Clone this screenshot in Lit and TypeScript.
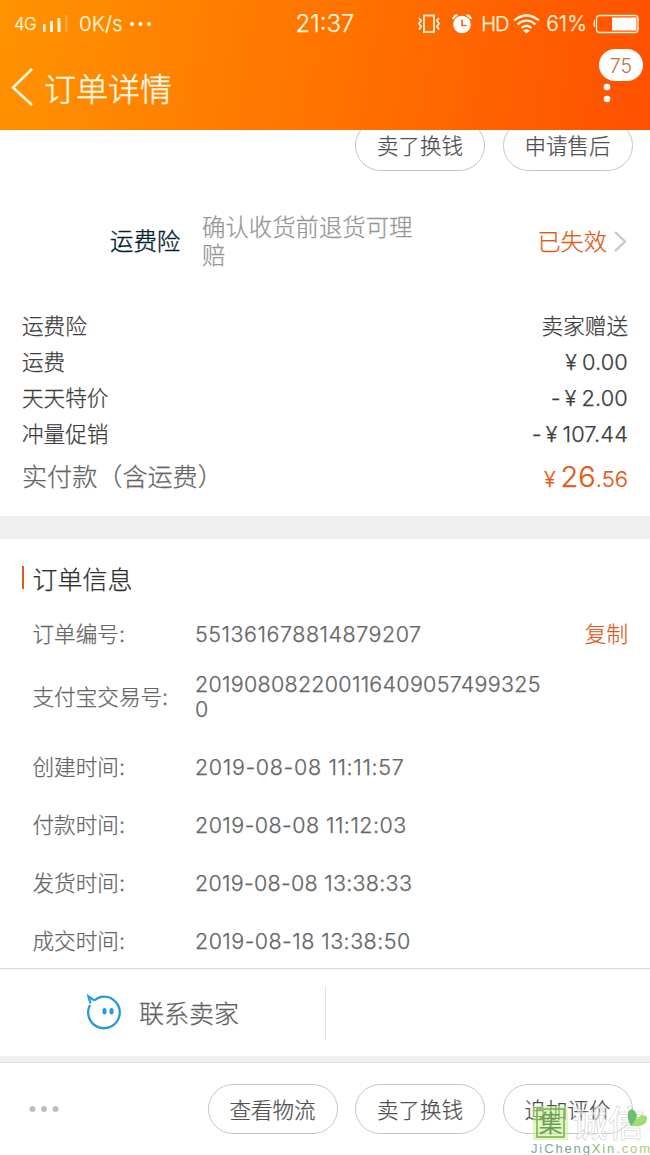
import { LitElement, html, css } from "lit";
import { customElement } from "lit/decorators.js";

interface InfoRow {
  label: string;
  value: string;
  kind: string;
  copy?: boolean;
}

const FEES = [
  { label: "运费险", value: "卖家赠送", kind: "cjk" },
  { label: "运费", sign: "", value: "0.00", kind: "num" },
  { label: "天天特价", sign: "-", value: "2.00", kind: "num" },
  { label: "冲量促销", sign: "-", value: "107.44", kind: "num" },
];

const INFO: InfoRow[] = [
  { label: "订单编号:", value: "551361678814879207", kind: "id", copy: true },
  { label: "支付宝交易号:", value: "2019080822001164090574993250", kind: "trade" },
  { label: "创建时间:", value: "2019-08-08 11:11:57", kind: "time wide" },
  { label: "付款时间:", value: "2019-08-08 11:12:03", kind: "time" },
  { label: "发货时间:", value: "2019-08-08 13:38:33", kind: "time tight" },
  { label: "成交时间:", value: "2019-08-18 13:38:50", kind: "time" },
];

@customElement("status-bar")
class StatusBar extends LitElement {
  static styles = css`
    :host { display: grid; grid-template-columns: 1fr auto 1fr; height: 44px; align-items: center;
      padding: 1px 11px 0 14px; box-sizing: border-box; color: #fff6dc; font: 300 20px/44px Inter, sans-serif; -webkit-text-stroke: .25px currentColor; }
    .left, .right { display: flex; align-items: center; }
    .right { justify-content: flex-end; }
    .net { font-size: 17px; letter-spacing: -0.8px; width: 24px; }
    .bars { margin-left: 5px; }
    .rate { margin-left: 11px; font-size: 20.500px; }
    .more { margin-left: 6px; }
    .clock { font-size: 24px; line-height: 45px; padding-right: 3px; }
    .alarm { margin-left: 11px; }
    .hd { margin-left: 9px; font-size: 20px; letter-spacing: -1.2px; }
    .wifi { margin-left: 5px; }
    .pct { margin-left: 6px; font-size: 21px; letter-spacing: .1px; }
    .battery { margin-left: 6px; }
    svg { display: block; flex: none; }
  `;
  render() {
    return html`
      <div class="left">
        <span class="net">4G</span>
        <svg class="bars" width="25" height="18" viewBox="0 0 25 18">
          <g fill="#fff6dc"><path d="M0 9h2.600v8H0zM7 6h3v11H7zM14.500 3h3v14h-3z"/></g>
          <path d="M22 0h2.500v17H22z" fill="#ffa540"/>
        </svg>
        <span class="rate">0K/s</span>
        <svg class="more" width="24" height="6"><g fill="#fff6dc"><circle cx="3" cy="3" r="2.100"/><circle cx="11.500" cy="3" r="2.100"/><circle cx="20" cy="3" r="2.100"/></g></svg>
      </div>
      <div class="clock">21:37</div>
      <div class="right">
        <svg width="24" height="20" viewBox="0 0 24 20" fill="none" stroke="#fff6dc" stroke-width="1.800">
          <rect x="7" y="1.500" width="10" height="16.500"/>
          <path d="M2 4l2 2.500-2 3 2 3-2 3M22 4l-2 2.500 2 3-2 3 2 3"/>
        </svg>
        <svg class="alarm" width="20" height="20" viewBox="0 0 20 20">
          <circle cx="10" cy="10.500" r="8.800" fill="#fff"/>
          <path d="M10 5.500v6h4.500" fill="none" stroke="#ff6600" stroke-width="1.700"/>
          <path d="M1 5q1-3.500 4.500-4M19 5q-1-3.500-4.500-4" fill="none" stroke="#fff" stroke-width="2"/>
        </svg>
        <span class="hd">HD</span>
        <svg class="wifi" width="27" height="20" viewBox="0 0 27 20" fill="none" stroke="#fff6dc" stroke-width="2.200">
          <path d="M1 6.500Q13.500-3.500 26 6.500M4.500 10.300Q13.500 2.800 22.500 10.300M8.500 14Q13.500 9.500 18.500 14"/>
          <path d="M10 16.500Q13.500 13.500 17 16.500L13.500 19.500Z" fill="#fff6dc" stroke="none"/>
        </svg>
        <span class="pct">61%</span>
        <svg class="battery" width="46" height="20" viewBox="0 0 46 20">
          <rect x="3.500" y="1.500" width="41.500" height="17" rx="3" fill="none" stroke="#fff6dc" stroke-width="1.300"/>
          <rect x="19" y="3.500" width="24.500" height="13" fill="#fff"/>
          <path d="M2 6v7H1q-1-3.500 0-7z" fill="#fff6dc"/>
        </svg>
      </div>`;
  }
}

@customElement("site-mark")
class SiteMark extends LitElement {
  static styles = css`
    :host { display: block; width: 122px; height: 49px; -webkit-text-stroke: 0; }
    svg { display: block; overflow: visible; }
    .seal { font: 400 24px "Noto Sans CJK SC", sans-serif; fill: #66a052; }
    .name { font: 500 36px "Noto Sans CJK SC", sans-serif; fill: #fff; fill-opacity: .5; stroke: #cfcbd0; stroke-width: .6; }
    .url { font: 400 13px "Liberation Sans", sans-serif; }
  `;
  render() {
    return html`<svg width="122" height="49" viewBox="0 0 122 49">
      <rect x="4" y="0" width="35" height="34" fill="#c8ef8d" opacity=".55"/>
      <rect x="8" y="3" width="27" height="28" fill="none" stroke="#79ad55" stroke-width="1.500"/>
      <text class="seal" x="9.500" y="26">集</text>
      <text class="name" x="43" y="31">诚信</text>
      <path d="M102 20Q95 6 103 3Q110 7 108 14Q112 6 118 11Q119 22 102 20Z" fill="#a2dc76"/>
      <path d="M102 20Q95 6 103 3Q112 9 102 20Z" fill="#6cbd76"/>
      <text class="url" x="2" y="47" textLength="119"><tspan fill="#83a9a3">Ji</tspan><tspan fill="#76a798">Cheng</tspan><tspan fill="#8bb976">Xin</tspan><tspan fill="#b1c873">.com</tspan></text>
    </svg>`;
  }
}

@customElement("app-root")
class AppRoot extends LitElement {
  static styles = css`
    :host { display: flex; flex-direction: column; width: 650px; height: 1155px; overflow: hidden; background: #fff;
      font-family: Inter, "Noto Sans CJK SC", sans-serif; font-weight: 300; color: #444; position: relative; white-space: nowrap;
      -webkit-text-stroke: .25px currentColor; }
    * { box-sizing: border-box; }
    svg { display: block; flex: none; }
    .header { height: 130px; flex: none; background: linear-gradient(100deg, #ff9300, #ff7500 48%, #ff5000); position: relative; z-index: 1; }
    .nav { height: 86px; display: flex; align-items: center; padding-left: 11px; color: #fffae6; }
    .title { font-size: 32px; line-height: 86px; margin: 5px 0 0 10px; -webkit-text-stroke-width: .4px; }
    .menu { margin: 23px 38.500px 0 auto; }
    .badge { position: absolute; left: 599px; top: 49px; width: 44px; height: 32px; border-radius: 16px; background: #fff;
      color: #c87048; font-size: 19.500px; line-height: 34px; text-align: center; -webkit-text-stroke: 0; }
    .actions { display: flex; gap: 17.500px; justify-content: flex-end; padding-right: 17.500px; flex: none; }
    .top { height: 50px; margin-top: -10px; }
    .pill { width: 130px; height: 50.500px; border: 1px solid #c6c6c6; border-radius: 26px; text-align: center;
      font-size: 21.500px; line-height: 50px; color: #505050; }
    .top .pill { line-height: 51px; }
    .insurance { height: 138px; flex: none; display: grid; grid-template-columns: 92px 1fr auto 12px; align-items: center;
      padding: 5px 24px 0 110px; font-size: 23.400px; line-height: 28px; }
    .ins-name { color: #061f2f; -webkit-text-stroke-width: .4px; }
    .ins-desc { width: 212px; white-space: normal; color: #969696; }
    .state { color: #e25a18; margin-right: 7px; font-size: 23.200px; }
    .fees { flex: none; padding: 0 22px; }
    .fee { display: flex; justify-content: space-between; height: 36px; line-height: 37px; font-size: 21.600px; color: #3c3c3c; }
    .money { display: flex; font-size: 21.800px; letter-spacing: .15px; }
    .yen { font-size: 21.500px; margin-right: 5px; }
    .minus { margin-right: 4px; }
    .total { display: flex; justify-content: space-between; font-size: 25.100px; line-height: 50px; height: 64px; color: #646464; }
    .sum { display: flex; align-items: baseline; color: #e25a18; line-height: 49px; }
    .big { font-size: 29px; }
    .small { font-size: 22px; }
    .band { height: 23px; background: #f0f0f0; flex: none; }
    .info { height: 429px; flex: none; padding-top: 15px; }
    .heading { display: flex; align-items: center; height: 51px; padding: 0 0 4px 21.500px; gap: 8.500px; font-size: 25px; color: #303030; }
    .tick { width: 2.500px; height: 23px; background: #e2571a; }
    .row { display: grid; grid-template-columns: 162.500px 350px 1fr; align-items: center; height: 57.800px; padding: 2px 22px 0 32.500px;
      font-size: 21.600px; line-height: 25px; color: #666; }
    .row.trade { height: 67px; margin-bottom: 8px; }
    .value { overflow-wrap: anywhere; white-space: normal; font-size: 21.500px; letter-spacing: .52px; }
    .trade .value { letter-spacing: .27px; }
    .time .value { letter-spacing: .44px; }
    .wide .value { letter-spacing: .65px; }
    .tight .value { letter-spacing: .27px; }
    .copy { color: #e25a18; text-align: right; }
    .contact { height: 88px; flex: none; border-top: 1px solid #d8d8d8; display: flex; align-items: center; }
    .seller { width: 326px; height: 54px; border-right: 1px solid #e2e2e2; display: flex; align-items: center; padding: 0 0 1.500px 86px;
      gap: 17px; font-size: 25px; color: #606060; }
    .strip { height: 7px; background: #f1f1f1; border-bottom: 1px solid #dedede; flex: none; }
    .bottom { flex: 1; display: flex; align-items: center; justify-content: space-between; padding-left: 29px; }
    .mark { position: absolute; left: 529px; top: 1106px; }
  `;

  render() {
    return html`
      <header class="header">
        <status-bar></status-bar>
        <div class="nav">
          <svg width="23" height="40" viewBox="0 0 23 40"><path d="M21 2L2 20.500 21 38" fill="none" stroke="#fffae6" stroke-width="2.500"/></svg>
          <span class="title">订单详情</span>
          <svg class="menu" width="10" height="35" viewBox="0 0 10 35"><circle cx="5" cy="6" r="3.300" fill="#fff"/><circle cx="5" cy="18" r="3.300" fill="#fff"/></svg>
        </div>
        <span class="badge">75</span>
      </header>
      <div class="actions top"><div class="pill">卖了换钱</div><div class="pill">申请售后</div></div>
      <section class="insurance">
        <span class="ins-name">运费险</span>
        <span class="ins-desc">确认收货前退货可理赔</span>
        <span class="state">已失效</span>
        <svg width="12" height="22" viewBox="0 0 12 22"><path d="M1 1L11 10.500 1 20" fill="none" stroke="#c8c8c8" stroke-width="2.300"/></svg>
      </section>
      <section class="fees">
        ${FEES.map((f) => html`<div class="fee"><span>${f.label}</span>${f.kind === "cjk"
          ? html`<span>${f.value}</span>`
          : html`<span class="money">${f.sign ? html`<span class="minus">-</span>` : ""}<span class="yen">¥</span><span>${f.value}</span></span>`}</div>`)}
        <div class="total"><span>实付款（含运费）</span>
          <span class="sum"><span class="yen">¥</span><span class="big">26</span><span class="small">.56</span></span></div>
      </section>
      <div class="band"></div>
      <section class="info">
        <div class="heading"><i class="tick"></i><span>订单信息</span></div>
        ${INFO.map((r) => html`<div class="row ${r.kind}"><span>${r.label}</span><span class="value">${r.value}</span>
          ${r.copy ? html`<span class="copy">复制</span>` : ""}</div>`)}
      </section>
      <section class="contact">
        <div class="seller">
          <svg width="36" height="36" viewBox="0 0 36 36">
            <path d="M8.500 6.500Q13 2.600 18 2.600A15.800 15.800 0 1 1 4 11M8.500 6.500L2.500 2.500 4.500 9.500" fill="none" stroke="#259bd8" stroke-width="2.300"/>
            <rect x="16.500" y="14" width="4" height="6.500" rx="2" fill="#259bd8"/><rect x="23.500" y="14" width="4" height="6.500" rx="2" fill="#259bd8"/>
          </svg>
          <span>联系卖家</span>
        </div>
      </section>
      <div class="strip"></div>
      <footer class="bottom">
        <svg width="30" height="8"><g fill="#bebebe"><circle cx="3.500" cy="4" r="3"/><circle cx="15" cy="4" r="3"/><circle cx="26.500" cy="4" r="3"/></g></svg>
        <div class="actions"><div class="pill">查看物流</div><div class="pill">卖了换钱</div><div class="pill">追加评价</div></div>
      </footer>
      <site-mark class="mark"></site-mark>`;
  }
}
